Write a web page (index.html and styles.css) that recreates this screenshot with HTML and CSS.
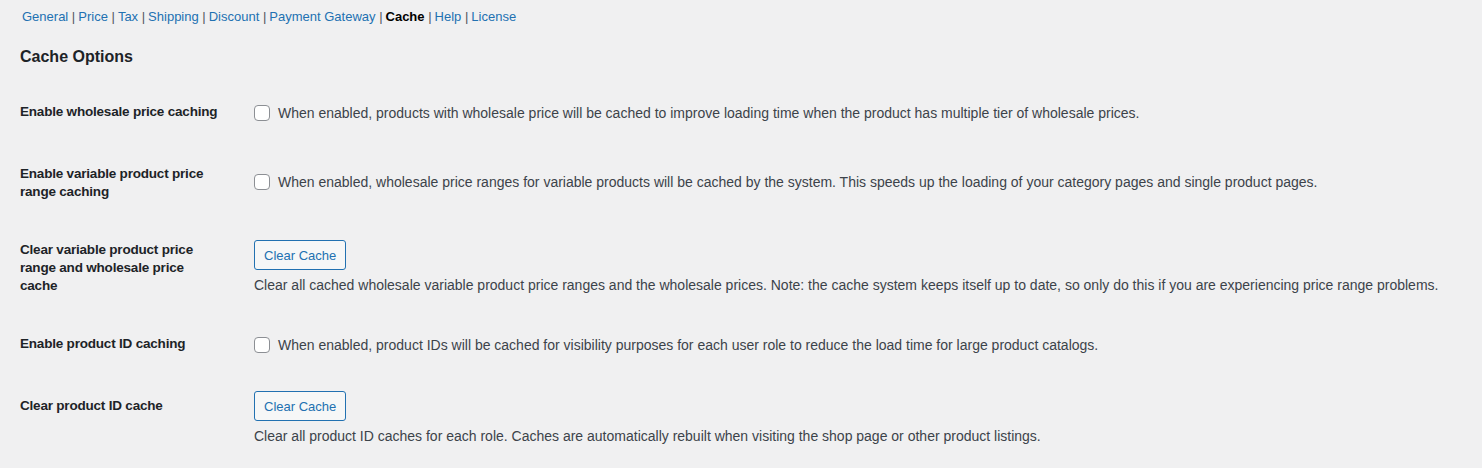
FILE: index.html
```html
<!DOCTYPE html>
<html>
   <head>
      <meta charset="utf-8">
      <title>Wholesale Prices - Cache</title>
      <link rel="stylesheet" href="styles.css">
   </head>
   <body>
      <div class="wrap">
         <ul class="subsubsub">
            <li><a href="#">General</a> |</li>
            <li><a href="#">Price</a> |</li>
            <li><a href="#">Tax</a> |</li>
            <li><a href="#">Shipping</a> |</li>
            <li><a href="#">Discount</a> |</li>
            <li><a href="#">Payment Gateway</a> |</li>
            <li><a href="#" class="current">Cache</a> |</li>
            <li><a href="#">Help</a> |</li>
            <li><a href="#">License</a></li>
         </ul>

         <h2 class="title">Cache Options</h2>

         <div class="form-table">
            <div class="row">
               <div class="label">Enable wholesale price caching</div>
               <div class="field">
                  <label><input type="checkbox" class="check"> When enabled, products with wholesale price will be cached to improve loading time when the product has multiple tier of wholesale prices.</label>
               </div>
            </div>

            <div class="row">
               <div class="label">Enable variable product price range caching</div>
               <div class="field">
                  <label><input type="checkbox" class="check"> When enabled, wholesale price ranges for variable products will be cached by the system. This speeds up the loading of your category pages and single product pages.</label>
               </div>
            </div>

            <div class="row">
               <div class="label">Clear variable product price range and wholesale price cache</div>
               <div class="field">
                  <button type="button" class="button">Clear Cache</button>
                  <p class="description">Clear all cached wholesale variable product price ranges and the wholesale prices. Note: the cache system keeps itself up to date, so only do this if you are experiencing price range problems.</p>
               </div>
            </div>

            <div class="row">
               <div class="label">Enable product ID caching</div>
               <div class="field">
                  <label><input type="checkbox" class="check"> When enabled, product IDs will be cached for visibility purposes for each user role to reduce the load time for large product catalogs.</label>
               </div>
            </div>

            <div class="row">
               <div class="label">Clear product ID cache</div>
               <div class="field">
                  <button type="button" class="button">Clear Cache</button>
                  <p class="description">Clear all product ID caches for each role. Caches are automatically rebuilt when visiting the shop page or other product listings.</p>
               </div>
            </div>
         </div>
      </div>
   </body>
</html>
```

FILE: styles.css
```css
body {
   margin: 0;
   background: #f0f0f1;
   color: #3c434a;
   font-family: "Liberation Sans", Arial, sans-serif;
   font-size: 14px;
}

.wrap { padding-left: 20px; }

.subsubsub {
   list-style: none;
   margin: 0;
   padding: 8px 0 0 2px;
   display: flex;
   font-size: 13px;
   line-height: 18px;
   color: #50575e;
}
.subsubsub li { white-space: pre; margin-right: 3px; }
.subsubsub a { color: #2271b1; text-decoration: none; }
.subsubsub a.current { color: #000; font-weight: 600; }

.title {
   margin: 20px 0 14px;
   font-size: 16px;
   line-height: 22px;
   font-weight: 600;
   color: #1d2327;
}

.row {
   display: flex;
   min-height: 62px;
}

.label {
   width: 200px;
   flex: none;
   padding: 21px 34px 19px 0;
   font-size: 13.5px;
   letter-spacing: -0.2px;
   line-height: 18px;
   font-weight: 600;
   color: #1d2327;
}

.field {
   align-self: center;
   padding: 15px 10px 15px 0;
   line-height: 18px;
}

.field label { display: flex; align-items: center; }

.check {
   appearance: none;
   width: 16px;
   height: 16px;
   margin: 0 8px 0 0;
   border: 1px solid #8c8f94;
   border-radius: 4px;
   background: #fff;
   flex: none;
}

.button {
   display: block;
   height: 30px;
   padding: 0 9px;
   border: 1px solid #2271b1;
   border-radius: 3px;
   background: #f6f7f7;
   color: #2271b1;
   font-family: inherit;
   font-size: 13px;
}

.description {
   margin: 6px 0 0;
}
```
